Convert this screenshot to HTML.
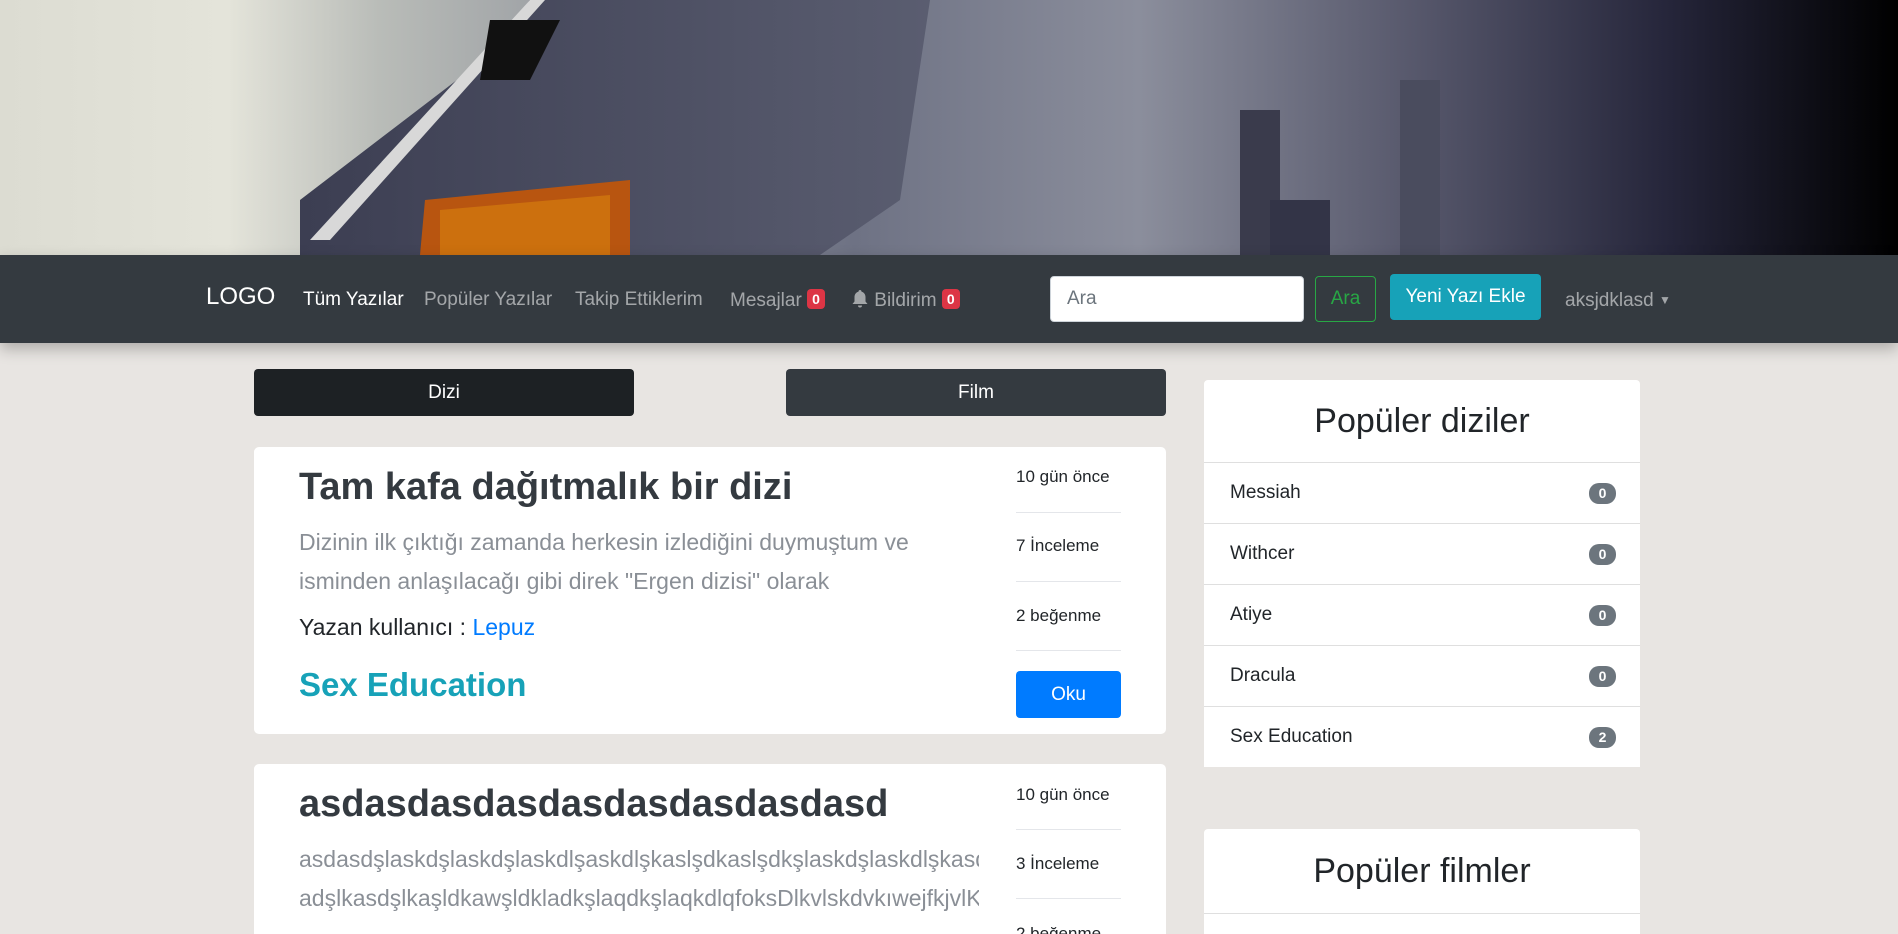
<!DOCTYPE html>
<html><head><meta charset="utf-8"><style>
*{box-sizing:border-box;margin:0;padding:0}
html,body{width:1898px;height:934px;overflow:hidden}
body{background:#e8e5e2;font-family:"Liberation Sans",sans-serif;color:#212529;position:relative}
.abs{position:absolute}
.nav{top:255px;left:0;width:1898px;height:88px;background:#343a40;box-shadow:0 6px 14px rgba(0,0,0,.25)}
.nl{position:absolute;top:289px;font-size:19px;color:rgba(255,255,255,.55);line-height:22px;white-space:nowrap}
.badge{display:inline-block;background:#dc3545;color:#fff;font-size:14px;font-weight:bold;border-radius:4px;padding:2px 5px;line-height:16px;vertical-align:2px}
.card{background:#fff;border-radius:5px;position:absolute}
.btn{position:absolute;color:#fff;font-size:19px;text-align:center;border-radius:4px}
.meta{position:absolute;left:1016px;width:105px;font-size:17px;color:#212529;line-height:20px}
.sep{position:absolute;left:1016px;width:105px;height:1px;background:#e4e6ea}
.li{position:absolute;left:1204px;width:436px;height:61px;border-top:1px solid #dfdfdf;background:#fff;font-size:19px;padding-left:26px;line-height:60px}
.pb{position:absolute;right:24px;top:20px;background:#6c757d;color:#fff;font-size:14px;font-weight:bold;border-radius:10px;width:27px;height:21px;line-height:21px;text-align:center}
</style></head><body>
<svg class="abs" style="left:0;top:0" width="1898" height="255" viewBox="0 0 1898 255">
<defs>
<linearGradient id="bg" x1="0" x2="1" y1="0" y2="0">
<stop offset="0" stop-color="#dcdcd2"/><stop offset="0.12" stop-color="#e4e4da"/><stop offset="0.2" stop-color="#b9bcb8"/><stop offset="0.45" stop-color="#6e7284"/><stop offset="0.6" stop-color="#8b8e9c"/><stop offset="0.75" stop-color="#55566a"/><stop offset="0.88" stop-color="#25253a"/><stop offset="1" stop-color="#000"/></linearGradient>
<linearGradient id="hm" x1="0" x2="1"><stop offset="0" stop-color="#3c3e52"/><stop offset="1" stop-color="#5a5d70"/></linearGradient>
</defs>
<rect width="1898" height="255" fill="url(#bg)"/>
<polygon points="530,0 930,0 900,200 820,255 300,255 300,200 470,70" fill="url(#hm)"/>
<polygon points="530,0 545,0 330,240 310,240" fill="#d8d8d8"/>
<polygon points="490,20 560,20 530,80 480,80" fill="#111"/>
<polygon points="425,200 630,180 630,255 420,255" fill="#b85510"/>
<polygon points="440,210 610,195 610,255 440,255" fill="#d8820e" opacity=".6"/>
<rect x="1240" y="110" width="40" height="145" fill="#3a3b4c"/>
<rect x="1400" y="80" width="40" height="175" fill="#4a4c5e"/>
<rect x="1270" y="200" width="60" height="55" fill="#333447"/>
</svg>
<div class="abs nav"></div>
<div class="nl" style="left:206px;top:286px;font-size:24px;color:#fff">LOGO</div>
<div class="nl" style="left:303px;color:#fff">Tüm Yazılar</div>
<div class="nl" style="left:424px">Popüler Yazılar</div>
<div class="nl" style="left:575px">Takip Ettiklerim</div>
<div class="nl" style="left:730px">Mesajlar <span class="badge">0</span></div>
<div class="nl" style="left:851px"><svg width="18" height="20" viewBox="0 0 18 20" style="vertical-align:-3px"><path d="M9 1c-1 0-1.5.8-1.5 1.6C5 3.3 3.5 5.5 3.5 8v4.5L1.5 15h15l-2-2.5V8c0-2.5-1.5-4.7-4-5.4C10.5 1.8 10 1 9 1zM7 16.5a2 2 0 0 0 4 0z" fill="rgba(255,255,255,.55)"/></svg> Bildirim <span class="badge">0</span></div>
<div class="abs" style="left:1050px;top:276px;width:254px;height:46px;background:#fff;border-radius:4px;border:1px solid #ced4da;padding-left:16px;line-height:44px;font-size:19px;color:#6c757d">Ara</div>
<div class="abs" style="left:1315px;top:276px;width:61px;height:46px;border:1px solid #28a745;border-radius:4px;color:#28a745;text-align:center;line-height:44px;font-size:19px">Ara</div>
<div class="btn" style="left:1390px;top:274px;width:151px;height:46px;background:#17a2b8;line-height:46px">Yeni Yazı Ekle</div>
<div class="nl" style="left:1565px">aksjdklasd <span style="font-size:12px;vertical-align:2px">▼</span></div>

<div class="btn" style="left:254px;top:369px;width:380px;height:47px;background:#1d2124;line-height:47px">Dizi</div>
<div class="btn" style="left:786px;top:369px;width:380px;height:47px;background:#343a40;line-height:47px">Film</div>

<div class="card" style="left:254px;top:447px;width:912px;height:287px"></div>
<div class="abs" style="left:299px;top:466px;font-size:38px;font-weight:bold;color:#343a40">Tam kafa dağıtmalık bir dizi</div>
<div class="abs" style="left:299px;top:523px;width:690px;font-size:23px;line-height:39px;color:#8a8f96">Dizinin ilk çıktığı zamanda herkesin izlediğini duymuştum ve isminden anlaşılacağı gibi direk "Ergen dizisi" olarak</div>
<div class="abs" style="left:299px;top:614px;font-size:23px">Yazan kullanıcı : <span style="color:#007bff">Lepuz</span></div>
<div class="abs" style="left:299px;top:666px;font-size:33px;font-weight:bold;color:#17a2b8">Sex Education</div>
<div class="meta" style="top:467px">10 gün önce</div><div class="sep" style="top:512px"></div>
<div class="meta" style="top:536px">7 İnceleme</div><div class="sep" style="top:581px"></div>
<div class="meta" style="top:606px">2 beğenme</div><div class="sep" style="top:650px"></div>
<div class="btn" style="left:1016px;top:671px;width:105px;height:47px;background:#007bff;line-height:47px">Oku</div>

<div class="card" style="left:254px;top:764px;width:912px;height:170px;border-radius:5px 5px 0 0;overflow:hidden">
<div class="abs" style="left:45px;top:19px;font-size:38px;font-weight:bold;color:#343a40">asdasdasdasdasdasdasdasdasd</div>
<div class="abs" style="left:45px;top:76px;width:680px;font-size:23px;line-height:39px;color:#8a8f96;overflow:hidden;white-space:nowrap">asdasdşlaskdşlaskdşlaskdlşaskdlşkaslşdkaslşdkşlaskdşlaskdlşkasdşlk<br>adşlkasdşlkaşldkawşldkladkşlaqdkşlaqkdlqfoksDlkvlskdvkıwejfkjvlK</div>
<div class="meta" style="left:762px;top:21px">10 gün önce</div><div class="sep" style="left:762px;top:65px"></div>
<div class="meta" style="left:762px;top:90px">3 İnceleme</div><div class="sep" style="left:762px;top:134px"></div>
<div class="meta" style="left:762px;top:160px">2 beğenme</div>
</div>

<div class="card" style="left:1204px;top:380px;width:436px;height:82px;border-radius:4px 4px 0 0;text-align:center;font-size:34px;line-height:82px;color:#212529">Popüler diziler</div>
<div class="li" style="top:462px">Messiah<span class="pb">0</span></div>
<div class="li" style="top:523px">Withcer<span class="pb">0</span></div>
<div class="li" style="top:584px">Atiye<span class="pb">0</span></div>
<div class="li" style="top:645px">Dracula<span class="pb">0</span></div>
<div class="li" style="top:706px">Sex Education<span class="pb">2</span></div>
<div class="card" style="left:1204px;top:829px;width:436px;height:84px;border-radius:4px 4px 0 0;text-align:center;font-size:34px;line-height:84px;color:#212529">Popüler filmler</div>
<div class="li" style="top:913px;height:21px"></div>
</body></html>
